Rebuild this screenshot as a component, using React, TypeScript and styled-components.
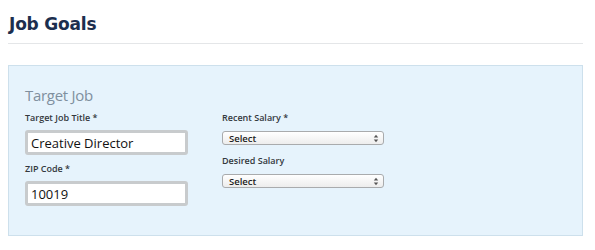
import styled, { createGlobalStyle } from "styled-components"

const GlobalStyle = createGlobalStyle`
    body {
        margin: 0;
        background: #ffffff;
        font-family: 'Open Sans', 'Liberation Sans', sans-serif;
    }
`

export default function App() {
    return (
        <Page>
            <GlobalStyle />
            <Heading>Job Goals</Heading>
            <Divider />
            <Panel>
                <PanelTitle>Target Job</PanelTitle>
                <Columns>
                    <Column>
                        <Field>
                            <Label>Target Job Title *</Label>
                            <TextInput defaultValue="Creative Director" />
                        </Field>
                        <Field>
                            <Label>ZIP Code *</Label>
                            <TextInput defaultValue="10019" />
                        </Field>
                    </Column>
                    <Column wide>
                        <Field small>
                            <Label>Recent Salary *</Label>
                            <SelectBox>
                                <span>Select</span>
                                <Arrows />
                            </SelectBox>
                        </Field>
                        <Field small>
                            <Label>Desired Salary</Label>
                            <SelectBox>
                                <span>Select</span>
                                <Arrows />
                            </SelectBox>
                        </Field>
                    </Column>
                </Columns>
            </Panel>
        </Page>
    )
}

function Arrows() {
    return (
        <svg width="6" height="9" viewBox="0 0 6 9">
            <path d="M3 0.8 L5.2 3.6 H0.8 Z" fill="#555" />
            <path d="M3 8.2 L5.2 5.4 H0.8 Z" fill="#555" />
        </svg>
    )
}

const Page = styled.div`
    width: 595px;
    height: 250px;
    padding: 0 12px 0 8px;
    box-sizing: border-box;
`

const Heading = styled.h1`
    margin: 0;
    padding: 13px 0 0 1px;
    font-family: 'DejaVu Sans', Verdana, sans-serif;
    font-size: 17px;
    font-weight: 700;
    color: #1c2e4e;
    letter-spacing: -0.2px;
    line-height: 22px;
`

const Divider = styled.div`
    margin-top: 8px;
    height: 1px;
    background: #e4e6e8;
`

const Panel = styled.div`
    margin-top: 21px;
    height: 171px;
    box-sizing: border-box;
    background: #e6f3fc;
    border: 1px solid #cde0ec;
    padding: 19px 16px 0 16px;
`

const PanelTitle = styled.h2`
    margin: 0;
    font-size: 15px;
    font-weight: 400;
    color: #7f8f9e;
    line-height: 20px;
    letter-spacing: -0.3px;
`

const Columns = styled.div`
    display: flex;
    gap: 34px;
    margin-top: 7px;
`

interface ColumnProps {
    wide?: boolean
}

const Column = styled.div<ColumnProps>`
    display: flex;
    flex-direction: column;
    gap: ${props => props.wide ? "10px" : "8px"};
    width: ${props => props.wide ? "162px" : "163px"};
`

interface FieldProps {
    small?: boolean
}

const Field = styled.div<FieldProps>`
    display: flex;
    flex-direction: column;
    gap: ${props => props.small ? "7px" : "6px"};
`

const Label = styled.label`
    font-size: 9px;
    font-weight: 600;
    color: #33383d;
    line-height: 12px;
`

const TextInput = styled.input`
    box-sizing: border-box;
    width: 163px;
    height: 25px;
    border: 3px solid #c8cbcd;
    border-radius: 3px;
    background: #ffffff;
    padding: 0 3px;
    font-family: 'Open Sans', 'Liberation Sans', sans-serif;
    font-size: 13px;
    color: #111;
    outline: none;
`

const SelectBox = styled.div`
    box-sizing: border-box;
    width: 162px;
    height: 14px;
    display: flex;
    align-items: center;
    justify-content: space-between;
    padding: 0 4px 0 6px;
    border: 1px solid #a9abad;
    border-radius: 3px;
    background: linear-gradient(#ffffff, #ededed);
    font-size: 9.5px;
    font-weight: 600;
    color: #222;
`
